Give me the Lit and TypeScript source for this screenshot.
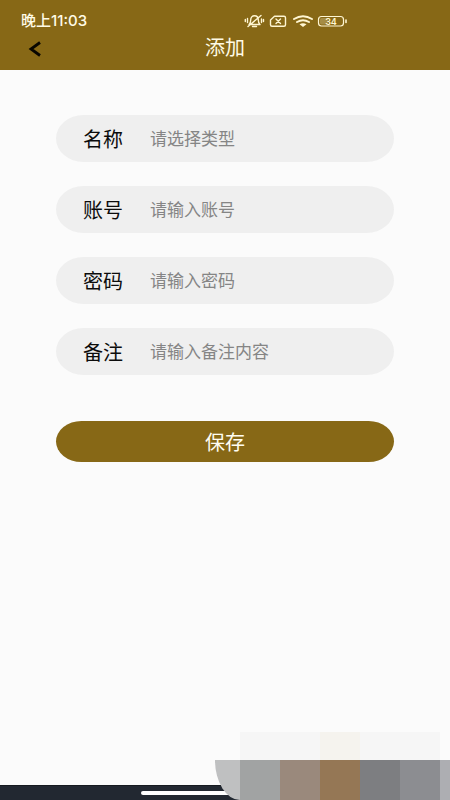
import { LitElement, html, css } from "lit";
import { customElement } from "lit/decorators.js";

const FIELDS = [
  { id: "name", label: "名称", hint: "请选择类型" },
  { id: "account", label: "账号", hint: "请输入账号" },
  { id: "password", label: "密码", hint: "请输入密码" },
  { id: "note", label: "备注", hint: "请输入备注内容" },
];

@customElement("app-root")
export class AppRoot extends LitElement {
  static styles = css`
    :host {
      display: flex;
      flex-direction: column;
      position: relative;
      min-height: 100vh;
      background: #fbfbfb;
      color: #0c0c0c;
      font-family: "Noto Sans CJK SC", sans-serif;
    }
    * {
      box-sizing: border-box;
    }
    header {
      background: #876816;
      color: #fffbe6;
      height: 70px;
      padding-top: 11px;
    }
    .status {
      display: flex;
      justify-content: space-between;
      align-items: center;
      height: 20px;
      padding: 0 102px 0 21px;
      font-family: Inter, "Noto Sans CJK SC", sans-serif;
      font-size: 15px;
      line-height: 20px;
      font-weight: 500;
    }
    .status svg {
      display: block;
    }
    .bar {
      display: grid;
      grid-template-columns: 70px 1fr 70px;
      align-items: center;
      height: 32px;
    }
    .back {
      display: flex;
      justify-content: center;
      padding: 4px 0 0;
      border: 0;
      background: none;
      color: #080600;
    }
    h1 {
      margin: 0;
      text-align: center;
      font-size: 20px;
      line-height: 32px;
      font-weight: 400;
    }
    form {
      flex: 1;
      display: flex;
      flex-direction: column;
      gap: 24px;
      padding: 45px 56px;
    }
    .field {
      display: flex;
      align-items: center;
      height: 47px;
      padding: 0 27px;
      border-radius: 28px / 24px;
      background: #efefef;
    }
    .field label {
      flex: none;
      width: 67px;
      font-size: 20px;
      line-height: 24px;
    }
    .field input {
      flex: 1;
      min-width: 0;
      height: 24px;
      padding: 0 0 2px;
      border: 0;
      outline: 0;
      background: none;
      font: inherit;
      font-size: 17px;
      line-height: 22px;
      color: inherit;
    }
    .field input::placeholder {
      color: #858585;
      opacity: 1;
    }
    .save {
      height: 41px;
      margin-top: 22px;
      padding: 0;
      border: 0;
      border-radius: 26px / 21px;
      background: #876816;
      color: #fffdf2;
      font: inherit;
      font-size: 20px;
      line-height: 24px;
    }
    footer {
      display: flex;
      justify-content: center;
      height: 15px;
      padding-top: 5px;
      background: #222831;
      border-top: 1px solid #161a20;
    }
    .handle {
      width: 168px;
      height: 4px;
      border-radius: 2px;
      background: #ffffff;
    }
    .mosaic {
      position: absolute;
      right: 0;
      bottom: 0;
      display: grid;
      grid-template-columns: 25px repeat(5, 40px) 10px;
      grid-template-rows: 28px 40px;
    }
    .pale {
      background: #f6f6f6;
    }
    .cream {
      background: #f5f3ee;
    }
    .edge {
      background: #bfc0c1;
      border-bottom-left-radius: 25px 40px;
    }
    .ash {
      background: #a1a3a3;
    }
    .clay {
      background: #9a897c;
    }
    .bronze {
      background: #957755;
    }
    .slate {
      background: #7d7e81;
    }
    .stone {
      background: #8c8d91;
    }
    .mist {
      background: #adaeb2;
    }
  `;

  render() {
    return html`
      <header>
        <div class="status">
          <span>晚上11:03</span>
          <svg width="104" height="16" viewBox="0 0 104 16" fill="none" stroke="#fff6d2" stroke-width="1.4" stroke-linecap="round" stroke-linejoin="round" aria-hidden="true">
            <path d="M5 11.5c1.5-1 1.7-2.500 1.700-4.500C6.700 4.300 8.300 2.800 10.500 2.800S14.300 4.300 14.300 7c0 2 .2 3.500 1.700 4.500zM8.500 13.500h4M4 13.500 17 2.500M3.500 5.500v4M1.300 6.500v2M17.500 6v3.500M19.500 6.500v2" />
            <path d="M30.500 3.200h9.500q1.500 0 1.500 1.500v7q0 1.500-1.500 1.500H28q-1.500 0-1.500-1.500V7zM32 6l4.500 4.500M36.500 6 32 10.500" />
            <path d="M50 6q9-5.500 18 0M53 9q6-3.600 12 0" stroke-width="1.900" />
            <path d="M55.500 11.200q3.500-2 7 0L59 14z" fill="#fff6d2" stroke="none" />
            <rect x="74.500" y="3.500" width="25" height="9.500" rx="3" stroke-width="1.200" />
            <rect x="76" y="5" width="8" height="6.500" rx="1.500" fill="#a58c45" stroke="none" />
            <path d="M102 7v2.500" stroke-width="1.600" />
            <text x="87" y="11.500" text-anchor="middle" font-family="Inter, sans-serif" font-size="9" font-weight="600" fill="#fff6d2" stroke="none">34</text>
          </svg>
        </div>
        <div class="bar">
          <button class="back" type="button" aria-label="返回">
            <svg width="14" height="16" viewBox="0 0 14 16" fill="none" stroke="currentColor" stroke-width="2.800" aria-hidden="true">
              <path d="M12 1.500 3 8l9 6.500" />
            </svg>
          </button>
          <h1>添加</h1>
        </div>
      </header>
      <form @submit=${(e: Event) => e.preventDefault()}>
        ${FIELDS.map(
          (f) => html`
            <div class="field">
              <label for=${f.id}>${f.label}</label>
              <input id=${f.id} type="text" placeholder=${f.hint} autocomplete="off" />
            </div>
          `
        )}
        <button class="save" type="submit">保存</button>
      </form>
      <footer><div class="handle"></div></footer>
      <div class="mosaic" aria-hidden="true">
        <i></i><i class="pale"></i><i class="pale"></i><i class="cream"></i><i class="pale"></i><i class="pale"></i><i></i>
        <i class="edge"></i><i class="ash"></i><i class="clay"></i><i class="bronze"></i><i class="slate"></i><i class="stone"></i><i class="mist"></i>
      </div>
    `;
  }
}
